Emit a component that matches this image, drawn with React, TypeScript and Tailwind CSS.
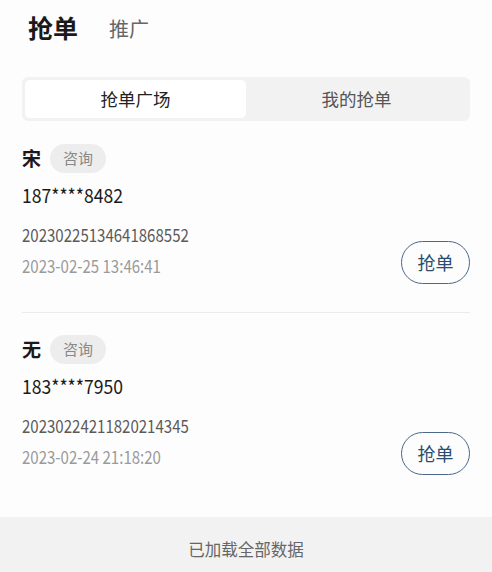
import React from 'react';

const orders = [
  { name: '宋', phone: '187****8482', no: '20230225134641868552', time: '2023-02-25 13:46:41' },
  { name: '无', phone: '183****7950', no: '20230224211820214345', time: '2023-02-24 21:18:20' },
];

const font = { fontFamily: '"Noto Sans CJK SC", "Noto Sans", sans-serif' };

export default function App() {
  return (
    <div className="w-[492px] h-[572px] bg-[#fdfdfd] flex flex-col overflow-hidden" style={font}>
      {/* Header */}
      <div className="flex items-end gap-[31px] pl-[28px] pt-[6px] h-[44px]">
        <span className="text-[25px] leading-[34px] font-bold text-[#1a1a1a]">抢单</span>
        <span className="text-[20px] leading-[30px] text-[#666]">推广</span>
      </div>

      {/* Tabs */}
      <div className="mx-[22px] mt-[33px] h-[44px] rounded-[6px] bg-[#f2f2f2] p-[3px] flex">
        <div className="flex-1 rounded-[5px] bg-white flex items-center justify-center text-[17.5px] text-[#222]">
          抢单广场
        </div>
        <div className="flex-1 flex items-center justify-center text-[17.5px] text-[#555]">我的抢单</div>
      </div>

      {/* List */}
      <div className="mx-[22px] mt-[23px] flex-1">
        {orders.map((o, i) => (
          <div key={o.no} className={i === 0 ? 'border-b border-[#ebebeb] pb-[35px]' : 'pt-[22px]'}>
            <div className="flex items-center gap-[9px] h-[29px]">
              <span className="text-[19px] font-bold text-[#1a1a1a]">{o.name}</span>
              <span className="h-[29px] px-[13px] rounded-full bg-[#ededed] text-[15px] text-[#888] flex items-center">
                咨询
              </span>
            </div>
            <div className="mt-[9px] h-[26px] text-[19.5px] leading-[26px] text-[#1a1a1a]">
              <span className="inline-block origin-left scale-x-[0.9]">{o.phone}</span>
            </div>
            <div className="flex items-end justify-between">
              <div>
                <div className="mt-[14px] h-[24px] text-[18px] leading-[24px] text-[#5a5a5a]">
                  <span className="inline-block origin-left scale-x-[0.835]">{o.no}</span>
                </div>
                <div className="mt-[7px] h-[24px] text-[18px] leading-[24px] text-[#9a9a9a]">
                  <span className="inline-block origin-left scale-x-[0.835]">{o.time}</span>
                </div>
              </div>
              <button
                type="button"
                className="w-[69px] h-[43px] rounded-full border-[1.5px] border-[#4a6888] text-[18px] text-[#2a4d6e] flex items-center justify-center mb-[-7px]"
              >
                抢单
              </button>
            </div>
          </div>
        ))}
      </div>

      {/* Footer */}
      <div className="h-[55px] pt-[9px] bg-[#f2f2f2] flex items-center justify-center text-[16.5px] text-[#666]">
        已加载全部数据
      </div>
    </div>
  );
}
